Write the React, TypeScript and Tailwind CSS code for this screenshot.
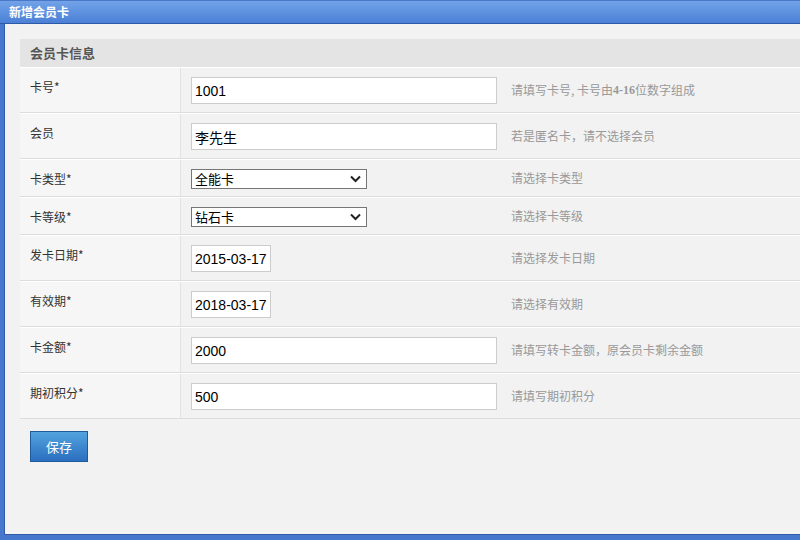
import React from 'react';

interface FieldRow {
  label: string;
  kind: 'input' | 'select' | 'date';
  value: string;
  hint: React.ReactNode;
}

const rows: FieldRow[] = [
  {
    label: '卡号*',
    kind: 'input',
    value: '1001',
    hint: (
      <>
        请填写卡号, 卡号由<span className="font-['Liberation_Serif',serif] font-bold">4-16</span>位数字组成
      </>
    )
  },
  { label: '会员', kind: 'input', value: '李先生', hint: '若是匿名卡，请不选择会员' },
  { label: '卡类型*', kind: 'select', value: '全能卡', hint: '请选择卡类型' },
  { label: '卡等级*', kind: 'select', value: '钻石卡', hint: '请选择卡等级' },
  { label: '发卡日期*', kind: 'date', value: '2015-03-17', hint: '请选择发卡日期' },
  { label: '有效期*', kind: 'date', value: '2018-03-17', hint: '请选择有效期' },
  { label: '卡金额*', kind: 'input', value: '2000', hint: '请填写转卡金额，原会员卡剩余金额' },
  { label: '期初积分*', kind: 'input', value: '500', hint: '请填写期初积分' }
];

const Chevron = () => (
  <svg className="absolute right-[6px] top-[6px] w-[11px] h-[8px] pointer-events-none" viewBox="0 0 11 8" fill="none">
    <path d="M1 1.5l4.5 4.5L10 1.5" stroke="#222" strokeWidth={2} />
  </svg>
);

const Field: React.FC<{ row: FieldRow }> = ({ row }) => {
  if (row.kind === 'select') {
    return (
      <div className="relative block w-[176px] h-[20px]">
        <select
          defaultValue={row.value}
          className="appearance-none block w-full h-full border border-[#767676] bg-white pl-[3px] text-[13px] leading-[18px] text-black outline-none"
        >
          <option>{row.value}</option>
        </select>
        <Chevron />
      </div>
    );
  }
  return (
    <input
      defaultValue={row.value}
      className={
        (row.kind === 'date' ? 'w-[80px] ' : 'w-[306px] ') +
        "block h-[27px] border border-[#cccccc] bg-white px-[3px] text-[14px] text-black outline-none font-['Liberation_Sans','Noto_Sans_CJK_SC',sans-serif]"
      }
    />
  );
};

export default function App() {
  return (
    <div className="w-[800px] h-[540px] overflow-hidden flex flex-col bg-[#4677cc] font-['Noto_Sans_CJK_SC','Liberation_Sans',sans-serif]">
      {/* title bar */}
      <div className="h-[24px] shrink-0 flex items-center pl-[9px] border-t border-t-[#4a78c8] border-b border-b-[#2d5aa6] bg-gradient-to-b from-[#72a3e8] to-[#4b80d6]">
        <span className="text-[12px] font-bold text-white leading-none">新增会员卡</span>
      </div>

      {/* body */}
      <div className="flex-1 flex pl-[4px] pb-[5px]">
        <div className="flex-1 bg-[#f2f2f2] border-l border-l-[#2f5ba8] border-b border-b-[#2f5ba8] pt-[15px] pl-[15px]">
          <div className="h-[28px] flex items-center pl-[10px] bg-[#e4e4e4] text-[13px] font-bold text-[#555555]">
            会员卡信息
          </div>

          <div className="flex flex-col">
            {rows.map((row) => (
              <div
                key={row.label}
                className="flex border-t border-t-white border-b border-b-[#dddddd]"
              >
                <div className="w-[161px] shrink-0 bg-[#f6f6f6] border-r border-r-[#e2e2e2] pl-[10px] pt-[11px] text-[12px] text-[#333333] leading-[16px]">
                  {row.label}
                </div>
                <div
                  className={
                    (row.kind === 'select' ? 'pb-[7px] ' : 'pb-[8px] ') +
                    'w-[320px] shrink-0 flex items-start pl-[10px] pt-[9px]'
                  }
                >
                  <Field row={row} />
                </div>
                <div className="flex-1 flex items-center pl-[10px] pb-[1px] text-[12px] text-[#999999] whitespace-nowrap">
                  {row.hint}
                </div>
              </div>
            ))}
          </div>

          <div className="pt-[12px] pl-[10px]">
            <button className="w-[58px] h-[31px] border border-[#1f5a9c] bg-gradient-to-b from-[#53a3df] to-[#2b6fbf] text-white text-[13px]">
              保存
            </button>
          </div>
        </div>
      </div>
    </div>
  );
}
